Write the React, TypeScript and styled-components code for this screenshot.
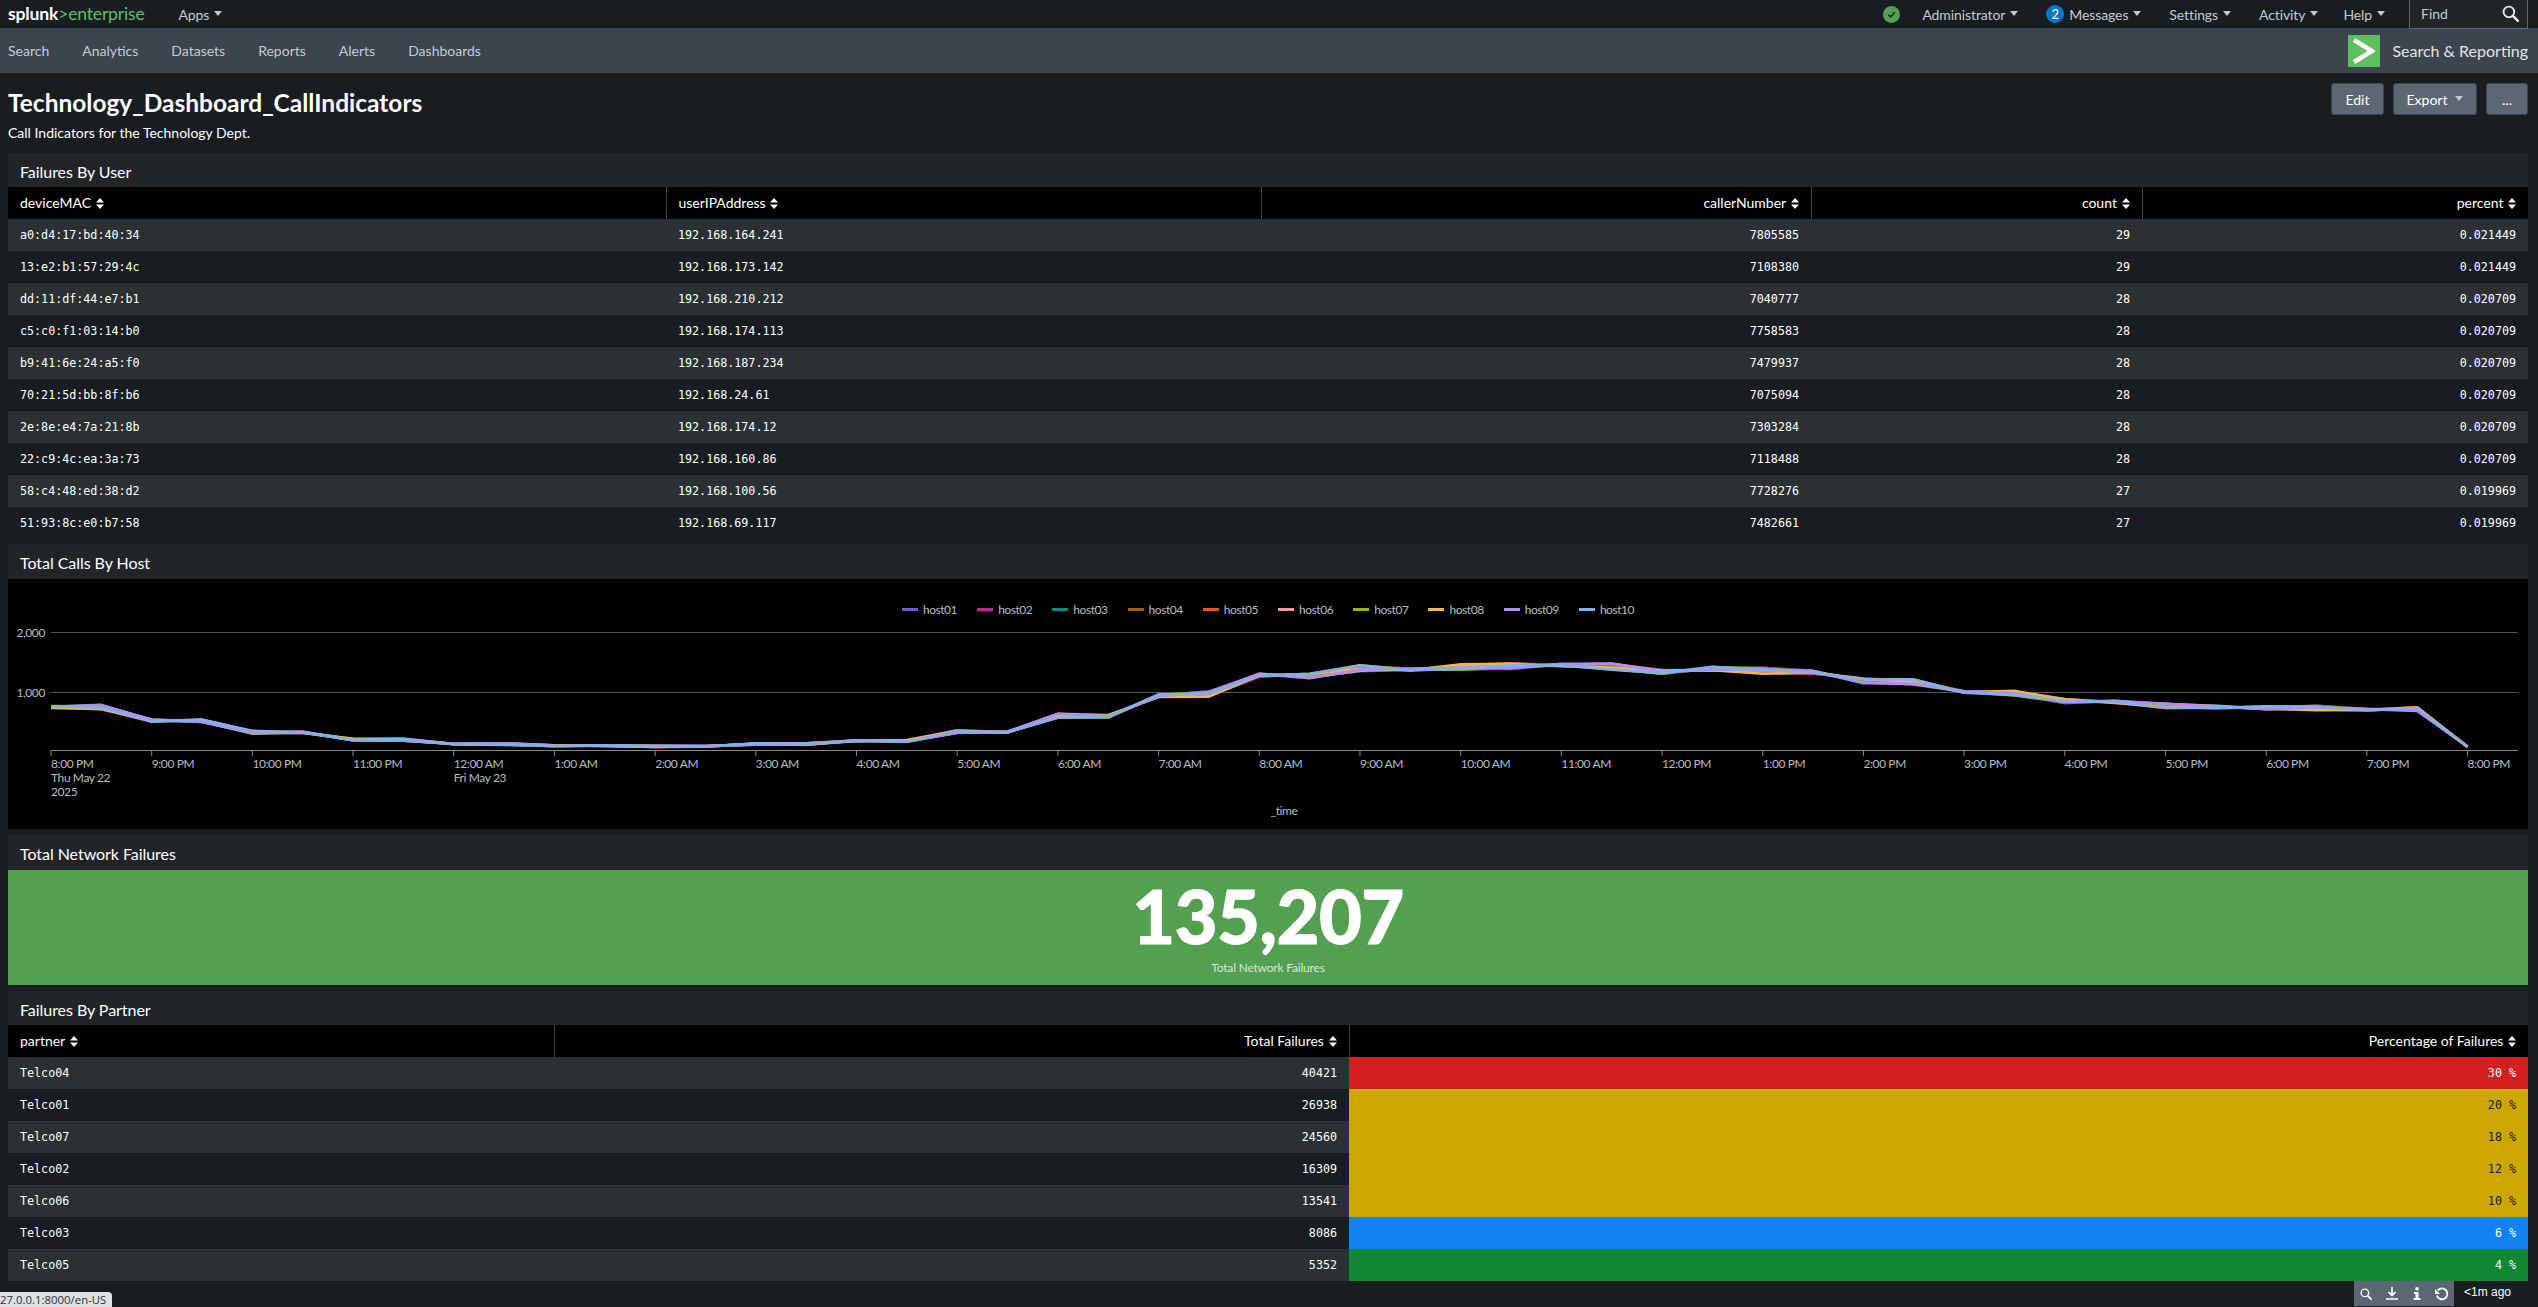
import React from "react";
import styled, { createGlobalStyle } from "styled-components";

const UI_FONT = `Lato, "Open Sans", sans-serif`;
const MONO_FONT = `"DejaVu Sans Mono", "Liberation Mono", monospace`;

const GlobalStyle = createGlobalStyle`
  html, body { margin: 0; padding: 0; background: #171d21; }
  body { font-family: ${UI_FONT}; color: #fff; }
  * { box-sizing: border-box; }
`;

const Page = styled.div`
  position: relative;
  width: 2538px;
  height: 1307px;
  overflow: hidden;
  background: #171d21;
`;

const TopBar = styled.header`
  display: flex;
  align-items: center;
  justify-content: space-between;
  height: 28px;
  padding: 0 10px 0 8px;
  background: #171d21;
`;
const TopLeft = styled.div`
  display: flex;
  align-items: center;
  gap: 34px;
`;
const Logo = styled.div`
  font-size: 17.6px;
  line-height: 22px;
  letter-spacing: -0.2px;
  color: #5cc05c;
  b { color: #fff; font-weight: 700; }
`;
const TopRight = styled.div`
  display: flex;
  align-items: center;
  height: 28px;
`;
const MenuItem = styled.a<{ $gap?: number }>`
  display: flex;
  align-items: center;
  gap: 5px;
  margin-right: ${(p) => p.$gap ?? 28}px;
  font-size: 14px;
  letter-spacing: -0.1px;
  color: #c3cbd4;
`;
const Caret = styled.span`
  display: inline-block;
  width: 0;
  height: 0;
  margin-top: -1px;
  border-left: 4px solid transparent;
  border-right: 4px solid transparent;
  border-top: 5px solid #c3cbd4;
`;
const StatusDot = styled.span`
  display: flex;
  align-items: center;
  justify-content: center;
  width: 17px;
  height: 17px;
  margin-right: 22px;
  border-radius: 50%;
  background: #53a051;
`;
const Badge = styled.span`
  display: flex;
  align-items: center;
  justify-content: center;
  width: 18px;
  height: 18px;
  border-radius: 50%;
  background: #0877c6;
  color: #fff;
  font-size: 13px;
`;
const FindBox = styled.div`
  display: flex;
  align-items: center;
  justify-content: space-between;
  width: 119px;
  height: 29px;
  padding: 0 8px 0 11px;
  background: #212527;
  border: 1px solid #5c6773;
  border-top: 0;
  font-size: 14px;
  color: #c3cbd4;
`;

const AppBar = styled.nav`
  display: flex;
  align-items: center;
  justify-content: space-between;
  height: 45px;
  padding: 0 10px 0 8px;
  background: #3c444d;
`;
const NavLinks = styled.div`
  display: flex;
  gap: 33px;
`;
const NavLink = styled.a`
  font-size: 14px;
  color: #c3cbd4;
`;
const AppLabel = styled.div`
  display: flex;
  align-items: center;
  gap: 12px;
  font-size: 16px;
  color: #e1e6eb;
`;
const AppMark = styled.span`
  display: flex;
  align-items: center;
  justify-content: center;
  width: 32px;
  height: 32px;
  background: #5cc05c;
`;

const TitleRow = styled.section`
  display: flex;
  justify-content: space-between;
  height: 80px;
  padding: 10px 10px 0 8px;
`;
const TitleText = styled.h1`
  margin: 6px 0 0;
  font-size: 24.5px;
  line-height: 27px;
  font-weight: 700;
  color: #fff;
`;
const SubTitle = styled.p`
  margin: 8px 0 0;
  font-size: 14px;
  line-height: 17px;
  color: #fff;
`;
const Actions = styled.div`
  display: flex;
  gap: 9px;
  align-items: flex-start;
`;
const ActionButton = styled.button<{ $w: number }>`
  display: flex;
  align-items: center;
  justify-content: center;
  gap: 8px;
  width: ${(p) => p.$w}px;
  height: 32px;
  padding: 0;
  background: #5c6773;
  border: 1px solid #3c444d;
  border-radius: 3px;
  color: #fff;
  font-family: ${UI_FONT};
  font-size: 14px;
`;

const Panel = styled.section<{ $gap?: number }>`
  width: 2520px;
  margin: ${(p) => p.$gap ?? 0}px 0 0 8px;
  background: #212527;
`;
const PanelTitle = styled.h2<{ $h: number }>`
  display: flex;
  align-items: center;
  height: ${(p) => p.$h}px;
  margin: 0;
  padding: 2px 12px 0;
  font-size: 16px;
  font-weight: 400;
  letter-spacing: -0.05px;
  color: #fff;
`;

const Table = styled.table`
  width: 100%;
  border-collapse: collapse;
  table-layout: fixed;
`;
const Col = styled.col<{ $w: number }>`
  width: ${(p) => p.$w}px;
`;
const HeadCell = styled.th<{ $right?: boolean }>`
  height: 32px;
  padding: 0 12px 2px;
  background: #000;
  border-left: 1px solid #3c444d;
  color: #fff;
  font-size: 14px;
  font-weight: 400;
  text-align: ${(p) => (p.$right ? "right" : "left")};
  &:first-child { border-left: 0; }
`;
const SortMark = styled.svg`
  margin-left: 1px;
  vertical-align: -1px;
`;
const BodyRow = styled.tr`
  background: #171d21;
  &:nth-child(odd) { background: #2b3033; }
`;
const BodyCell = styled.td<{ $right?: boolean; $bg?: string; $fg?: string }>`
  height: 32px;
  padding: 0 12px;
  font-family: ${MONO_FONT};
  font-size: 11.7px;
  color: ${(p) => p.$fg ?? "#fff"};
  text-align: ${(p) => (p.$right ? "right" : "left")};
  ${(p) => (p.$bg ? `background: ${p.$bg};` : "")}
`;

const ChartBody = styled.div`
  height: 250px;
  background: #000;
`;
const Legend = styled.div`
  display: flex;
  justify-content: center;
  gap: 20px;
  height: 38px;
  padding-top: 22px;
`;
const LegendItem = styled.span`
  display: flex;
  align-items: center;
  gap: 5px;
  height: 16px;
  font-size: 12px;
  letter-spacing: -0.45px;
  color: #b5bcc4;
`;
const Swatch = styled.i<{ $c: string }>`
  display: block;
  width: 16px;
  height: 3px;
  background: ${(p) => p.$c};
`;
const ChartSvg = styled.svg`
  display: block;
  text { font-family: ${UI_FONT}; font-size: 12px; letter-spacing: -0.4px; fill: #b5bcc4; }
`;

const SingleValue = styled.div`
  display: flex;
  flex-direction: column;
  align-items: center;
  height: 115px;
  background: #53a051;
`;
const BigNumber = styled.div`
  margin-top: 3px;
  font-size: 74px;
  line-height: 86px;
  font-weight: 900;
  letter-spacing: -0.5px;
  -webkit-text-stroke: 1px #fff;
  color: #fff;
`;
const BigLabel = styled.div`
  margin-top: 2px;
  font-size: 12px;
  line-height: 14px;
  letter-spacing: -0.2px;
  color: #d6e8d5;
`;

const FooterTools = styled.div`
  position: absolute;
  left: 2349px;
  top: 1281px;
  display: flex;
  width: 168px;
  height: 26px;
  padding: 0 5px 1px;
  background: #171d21;
  border-radius: 0 0 4px 4px;
`;
const ToolIcons = styled.div`
  display: flex;
  align-items: center;
  justify-content: space-between;
  width: 100px;
  padding: 0 5px 0 6px;
  background: #5c6773;
`;
const ToolAge = styled.span`
  margin-left: 10px;
  font-family: "Liberation Sans", sans-serif;
  font-size: 12px;
  line-height: 22px;
  color: #fff;
`;
const StatusTip = styled.div`
  position: absolute;
  left: 0;
  bottom: 0;
  width: 112px;
  height: 15px;
  background: #dee1e6;
  border-radius: 0 4px 0 0;
  color: #333;
  font-family: "Open Sans", sans-serif;
  font-size: 11.4px;
  line-height: 15px;
  white-space: nowrap;
`;

const userRows = [
  ["a0:d4:17:bd:40:34", "192.168.164.241", "7805585", "29", "0.021449"],
  ["13:e2:b1:57:29:4c", "192.168.173.142", "7108380", "29", "0.021449"],
  ["dd:11:df:44:e7:b1", "192.168.210.212", "7040777", "28", "0.020709"],
  ["c5:c0:f1:03:14:b0", "192.168.174.113", "7758583", "28", "0.020709"],
  ["b9:41:6e:24:a5:f0", "192.168.187.234", "7479937", "28", "0.020709"],
  ["70:21:5d:bb:8f:b6", "192.168.24.61", "7075094", "28", "0.020709"],
  ["2e:8e:e4:7a:21:8b", "192.168.174.12", "7303284", "28", "0.020709"],
  ["22:c9:4c:ea:3a:73", "192.168.160.86", "7118488", "28", "0.020709"],
  ["58:c4:48:ed:38:d2", "192.168.100.56", "7728276", "27", "0.019969"],
  ["51:93:8c:e0:b7:58", "192.168.69.117", "7482661", "27", "0.019969"],
];

const partnerRows = [
  { name: "Telco04", total: "40421", pct: "30 %", bg: "#d41f1f", fg: "#fff" },
  { name: "Telco01", total: "26938", pct: "20 %", bg: "#cba700", fg: "#1c1c1c" },
  { name: "Telco07", total: "24560", pct: "18 %", bg: "#cba700", fg: "#1c1c1c" },
  { name: "Telco02", total: "16309", pct: "12 %", bg: "#cba700", fg: "#1c1c1c" },
  { name: "Telco06", total: "13541", pct: "10 %", bg: "#cba700", fg: "#1c1c1c" },
  { name: "Telco03", total: "8086", pct: "6 %", bg: "#1182f3", fg: "#fff" },
  { name: "Telco05", total: "5352", pct: "4 %", bg: "#118832", fg: "#fff" },
];

const hostColors = [
  "#7b56db", "#cb2196", "#008c80", "#9d6300", "#f6540b",
  "#ff969e", "#99b100", "#f4b649", "#ae8cff", "#7cb2ee",
];

// half hour counts, 8PM to 8PM
const baseCounts = [
  737, 737, 505, 505, 308, 308, 183, 183, 110, 110, 81, 81, 71, 71, 110, 110,
  166, 160, 319, 312, 590, 580, 924, 958, 1280, 1268, 1398, 1370, 1415, 1432,
  1449, 1420, 1330, 1381, 1352, 1330, 1183, 1166, 992, 975, 839, 827, 754, 737,
  720, 720, 692, 703, 64,
];

const hours = [
  "8:00 PM", "9:00 PM", "10:00 PM", "11:00 PM", "12:00 AM", "1:00 AM", "2:00 AM", "3:00 AM",
  "4:00 AM", "5:00 AM", "6:00 AM", "7:00 AM", "8:00 AM", "9:00 AM", "10:00 AM", "11:00 AM",
  "12:00 PM", "1:00 PM", "2:00 PM", "3:00 PM", "4:00 PM", "5:00 PM", "6:00 PM", "7:00 PM", "8:00 PM",
];

const CHART_TOP = 618;
const PANEL_LEFT = 8;
const xOf = (hour: number) => 51 + hour * 100.69 - PANEL_LEFT;
const yOf = (count: number) => 751.5 - count * 0.059 - CHART_TOP;

function seriesPoints(host: number) {
  return baseCounts
    .map((v, i) => {
      const wobble = Math.sin(i * 1.7 + host * 2.3) + Math.sin(i * 0.6 + host * 4.1) * 0.6;
      const amp = i === 48 ? 0 : Math.sqrt(v) * 0.9;
      return `${xOf(i / 2).toFixed(1)},${yOf(v + wobble * amp).toFixed(1)}`;
    })
    .join(" ");
}

const Sort = () => (
  <SortMark width="8" height="11" viewBox="0 0 8 11">
    <path d="M4 0 8 4.4H0zM4 11 0 6.6h8z" fill="#fff" />
  </SortMark>
);

const SearchGlyph = ({ size, color }: { size: number; color: string }) => (
  <svg width={size} height={size} viewBox="0 0 16 16" fill="none" stroke={color}>
    <circle cx="6.5" cy="6.5" r="5" strokeWidth="1.8" />
    <path d="M10.4 10.4 15 15" strokeWidth="2.4" strokeLinecap="round" />
  </svg>
);

const CallChart = () => (
  <ChartBody>
    <Legend>
      {hostColors.map((c, i) => (
        <LegendItem key={c}>
          <Swatch $c={c} />
          {`host${String(i + 1).padStart(2, "0")}`}
        </LegendItem>
      ))}
    </Legend>
    <ChartSvg width="2520" height="212" viewBox="0 0 2520 212">
      <g stroke="#555" strokeWidth="1">
        <line x1="43" x2="2510" y1="15.5" y2="15.5" />
        <line x1="43" x2="2510" y1="75.5" y2="75.5" />
      </g>
      <line x1="43" x2="2510" y1="133.5" y2="133.5" stroke="#888" strokeWidth="1" />
      <text x="37" y="20" textAnchor="end">2,000</text>
      <text x="37" y="80" textAnchor="end">1,000</text>
      {hours.map((h, i) => (
        <g key={i}>
          <line x1={xOf(i)} x2={xOf(i)} y1="133" y2="139" stroke="#888" />
          <text x={xOf(i)} y="151">{h}</text>
        </g>
      ))}
      <text x={xOf(0)} y="165">Thu May 22</text>
      <text x={xOf(0)} y="179">2025</text>
      <text x={xOf(4)} y="165">Fri May 23</text>
      <text x="1276" y="198" textAnchor="middle">_time</text>
      {hostColors.map((c, i) => (
        <polyline key={c} points={seriesPoints(i)} fill="none" stroke={c} strokeWidth="2.6" strokeLinejoin="round" />
      ))}
    </ChartSvg>
  </ChartBody>
);

export default function App() {
  return (
    <Page>
      <GlobalStyle />
      <TopBar>
        <TopLeft>
          <Logo><b>splunk</b>&gt;enterprise</Logo>
          <MenuItem $gap={0}>Apps <Caret /></MenuItem>
        </TopLeft>
        <TopRight>
          <StatusDot>
            <svg width="9" height="9" viewBox="0 0 10 10" fill="none" stroke="#171d21" strokeWidth="1.6">
              <path d="M1.5 5.2 4 7.8 8.6 2.4" />
            </svg>
          </StatusDot>
          <MenuItem>Administrator <Caret /></MenuItem>
          <MenuItem><Badge>2</Badge>Messages <Caret /></MenuItem>
          <MenuItem>Settings <Caret /></MenuItem>
          <MenuItem $gap={25}>Activity <Caret /></MenuItem>
          <MenuItem $gap={24}>Help <Caret /></MenuItem>
          <FindBox>Find <SearchGlyph size={17} color="#e1e6eb" /></FindBox>
        </TopRight>
      </TopBar>

      <AppBar>
        <NavLinks>
          {["Search", "Analytics", "Datasets", "Reports", "Alerts", "Dashboards"].map((n) => (
            <NavLink key={n}>{n}</NavLink>
          ))}
        </NavLinks>
        <AppLabel>
          <AppMark>
            <svg width="22" height="26" viewBox="0 0 22 26" fill="none" stroke="#fff" strokeWidth="4.4">
              <path d="M1 2 19 13 1 24" />
            </svg>
          </AppMark>
          Search &amp; Reporting
        </AppLabel>
      </AppBar>

      <TitleRow>
        <div>
          <TitleText>Technology_Dashboard_CallIndicators</TitleText>
          <SubTitle>Call Indicators for the Technology Dept.</SubTitle>
        </div>
        <Actions>
          <ActionButton $w={53}>Edit</ActionButton>
          <ActionButton $w={84}>Export <Caret /></ActionButton>
          <ActionButton $w={42}>...</ActionButton>
        </Actions>
      </TitleRow>

      <Panel>
        <PanelTitle $h={34}>Failures By User</PanelTitle>
        <Table>
          <colgroup>
            <Col $w={658} /><Col $w={595} /><Col $w={550} /><Col $w={331} /><Col $w={386} />
          </colgroup>
          <thead>
            <tr>
              <HeadCell>deviceMAC <Sort /></HeadCell>
              <HeadCell>userIPAddress <Sort /></HeadCell>
              <HeadCell $right>callerNumber <Sort /></HeadCell>
              <HeadCell $right>count <Sort /></HeadCell>
              <HeadCell $right>percent <Sort /></HeadCell>
            </tr>
          </thead>
          <tbody>
            {userRows.map((r) => (
              <BodyRow key={r[0]}>
                <BodyCell>{r[0]}</BodyCell>
                <BodyCell>{r[1]}</BodyCell>
                <BodyCell $right>{r[2]}</BodyCell>
                <BodyCell $right>{r[3]}</BodyCell>
                <BodyCell $right>{r[4]}</BodyCell>
              </BodyRow>
            ))}
          </tbody>
        </Table>
      </Panel>

      <Panel $gap={5}>
        <PanelTitle $h={35}>Total Calls By Host</PanelTitle>
        <CallChart />
      </Panel>

      <Panel $gap={6}>
        <PanelTitle $h={35}>Total Network Failures</PanelTitle>
        <SingleValue>
          <BigNumber>135,207</BigNumber>
          <BigLabel>Total Network Failures</BigLabel>
        </SingleValue>
      </Panel>

      <Panel $gap={6}>
        <PanelTitle $h={34}>Failures By Partner</PanelTitle>
        <Table>
          <colgroup>
            <Col $w={546} /><Col $w={795} /><Col $w={1179} />
          </colgroup>
          <thead>
            <tr>
              <HeadCell>partner <Sort /></HeadCell>
              <HeadCell $right>Total Failures <Sort /></HeadCell>
              <HeadCell $right>Percentage of Failures <Sort /></HeadCell>
            </tr>
          </thead>
          <tbody>
            {partnerRows.map((r) => (
              <BodyRow key={r.name}>
                <BodyCell>{r.name}</BodyCell>
                <BodyCell $right>{r.total}</BodyCell>
                <BodyCell $right $bg={r.bg} $fg={r.fg}>{r.pct}</BodyCell>
              </BodyRow>
            ))}
          </tbody>
        </Table>
      </Panel>

      <FooterTools>
        <ToolIcons>
          <SearchGlyph size={12} color="#fff" />
          <svg width="12" height="13" viewBox="0 0 12 13" fill="none" stroke="#fff" strokeWidth="1.6">
            <path d="M6 0v8M2.5 5 6 8.5 9.5 5M0 12h12" />
          </svg>
          <svg width="8" height="13" viewBox="0 0 8 13" fill="#fff">
            <circle cx="4" cy="1.8" r="1.8" />
            <path d="M1 5h4.5v6H7.5v2H.5v-2h2V7H1z" />
          </svg>
          <svg width="14" height="14" viewBox="0 0 14 14" fill="none" stroke="#fff" strokeWidth="1.8">
            <path d="M2.8 3.4A5.4 5.4 0 1 1 1.8 8.4" />
            <path d="M0 7h5L0 2z" fill="#fff" stroke="none" />
          </svg>
        </ToolIcons>
        <ToolAge>&lt;1m ago</ToolAge>
      </FooterTools>
      <StatusTip>27.0.0.1:8000/en-US</StatusTip>
    </Page>
  );
}
